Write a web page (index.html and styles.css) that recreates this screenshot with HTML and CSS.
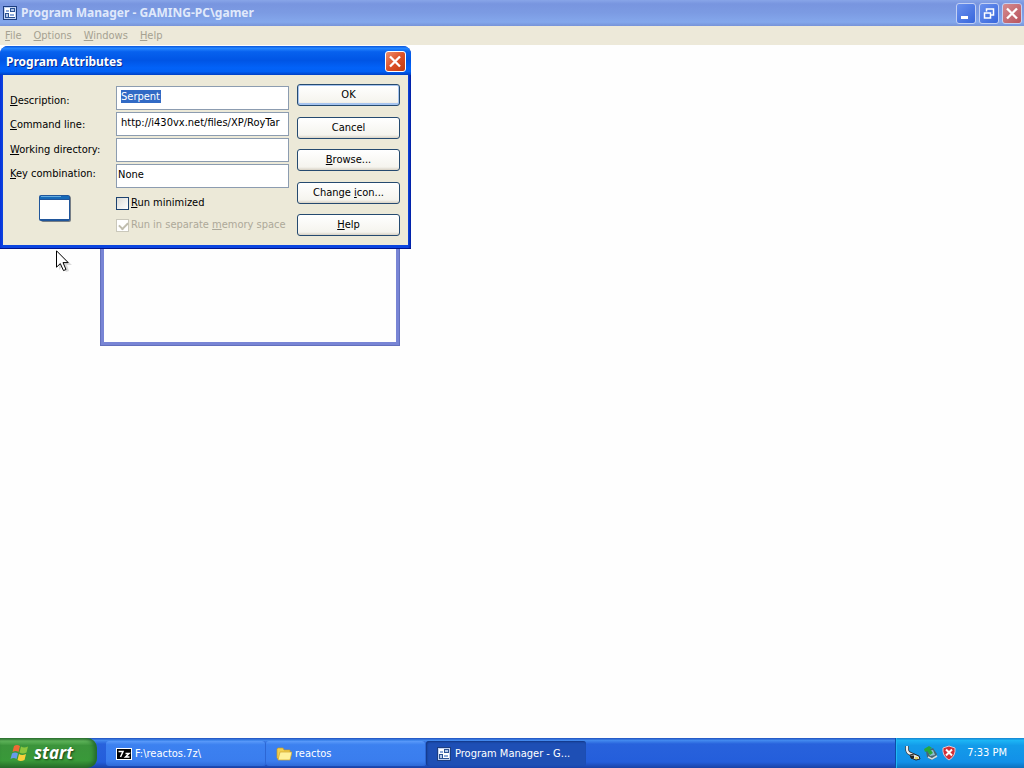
FILE: index.html
```html
<!DOCTYPE html>
<html lang="en">
<head>
<meta charset="utf-8">
<title>Program Manager - GAMING-PC\gamer</title>
<link rel="stylesheet" href="styles.css">
</head>
<body class="desktop">
<svg class="defs" aria-hidden="true">
  <symbol id="progman" viewBox="0 0 14 14">
    <rect x=".5" y=".5" width="13" height="13" fill="#c3d3f2" stroke="#1c3d80"/>
    <rect x="2" y="2" width="10" height="10" fill="#2c5394"/>
    <rect x="2" y="2" width="5" height="5" fill="#fff"/>
    <rect x="3" y="4" width="3" height="2" fill="#8eaada"/>
    <rect x="6" y="6" width="6" height="5" fill="#fff"/>
    <rect x="7" y="8" width="4" height="2" fill="#8eaada"/>
    <path d="M8 3h3v2H8zM3 8h2v3H3z" fill="#b3c7ea"/>
  </symbol>
  <symbol id="close" viewBox="0 0 18 18"><path d="M4 4l10 10M14 4L4 14" stroke="#fff" stroke-width="2.3"/></symbol>
</svg>
<main class="manager">
  <header class="manager-title">
    <svg class="title-icon"><use href="#progman"/></svg>
    <h1 class="caption">Program Manager - GAMING-PC\gamer</h1>
    <button class="control" aria-label="Minimize"><svg viewBox="0 0 18 18"><path d="M4 13h7" stroke="#fff" stroke-width="3"/></svg></button>
    <button class="control" aria-label="Restore"><svg viewBox="0 0 18 18"><path d="M6.500 7V4.500h7v6H11M6 4.500h8M4.500 8.500h6v5h-6zM4 8.500h7" fill="none" stroke="#fff" stroke-width="1.500"/></svg></button>
    <button class="control control-close" aria-label="Close"><svg><use href="#close"/></svg></button>
  </header>
  <nav class="menu">
    <button class="menu-item"><u>F</u>ile</button>
    <button class="menu-item"><u>O</u>ptions</button>
    <button class="menu-item"><u>W</u>indows</button>
    <button class="menu-item"><u>H</u>elp</button>
  </nav>
  <div class="workspace">
    <section class="group-window" aria-label="Program group"></section>
    <form class="dialog" aria-labelledby="dialog-title">
      <header class="dialog-title">
        <h2 class="caption" id="dialog-title">Program Attributes</h2>
        <button type="button" class="control control-close active" aria-label="Close"><svg><use href="#close"/></svg></button>
      </header>
      <div class="dialog-body">
        <div class="labels">
          <label for="description"><u>D</u>escription:</label>
          <label for="command"><u>C</u>ommand line:</label>
          <label for="directory"><u>W</u>orking directory:</label>
          <label for="keys"><u>K</u>ey combination:</label>
          <svg class="program-icon" viewBox="0 0 32 28">
            <rect x="2" y="2" width="30" height="26" rx="2" fill="#777e85"/>
            <rect x="0" y="1" width="31" height="26" rx="2" fill="#20569b"/>
            <path d="M1 2h29v3H1z" fill="#176ab8"/><path d="M2 2h20v1H2z" fill="#65acdf"/>
            <path d="M1 6h29v19H1z" fill="#fff"/>
          </svg>
        </div>
        <div class="fields">
          <input class="text-box selected" id="description" value="Serpent">
          <input class="text-box" id="command" value="http://i430vx.net/files/XP/RoyTar">
          <input class="text-box" id="directory">
          <input class="text-box hotkey" id="keys" value="None">
          <label class="option"><input type="checkbox" class="tick"><span><u>R</u>un minimized</span></label>
          <label class="option disabled"><input type="checkbox" class="tick" checked disabled><span>Run in separate <u>m</u>emory space</span></label>
        </div>
        <div class="actions">
          <button type="button" class="button default">OK</button>
          <button type="button" class="button">Cancel</button>
          <button type="button" class="button"><span><u>B</u>rowse...</span></button>
          <button type="button" class="button"><span>Change <u>i</u>con...</span></button>
          <button type="button" class="button"><span><u>H</u>elp</span></button>
        </div>
      </div>
    </form>
    <svg class="pointer" viewBox="0 0 16 22">
      <path d="M3 3v17l4-4 3 6 3-1-2-6h5z" fill="#999" opacity=".35"/>
      <path d="M.5.8v16.400l3.800-3.600 3.200 7 2.500-1.100-3-6.900h5.200z" fill="#fff" stroke="#000"/>
    </svg>
  </div>
</main>
<footer class="taskbar">
  <button class="start">
    <svg class="flag" viewBox="0 0 20 18">
      <path d="M4 2q3-2 6 0L8.500 8q-3-2-6 0z" fill="#ef6a35"/>
      <path d="M11 2.500q3 2 7 0L16.500 8.500q-4 2-7 0z" fill="#8cc63e"/>
      <path d="M2 9.500q3-2 6 0L6.500 15q-3-2-6 0z" fill="#669bea"/>
      <path d="M9 10q3 2 7 0L14.500 16q-4 2-7 0z" fill="#f9cf3b"/>
    </svg>
    <span>start</span>
  </button>
  <div class="tasks">
    <button class="task">
      <svg class="task-icon" viewBox="0 0 16 16"><path d="M0 2h16v12H0z" fill="#fff"/><path d="M1 3h14v10H1z" fill="#000"/><path d="M2.500 5.500H7L4.500 11M9.500 7.500H13l-3.500 3.500h4" fill="none" stroke="#fff" stroke-width="1.500"/></svg>
      <span>F:\reactos.7z\</span>
    </button>
    <button class="task">
      <svg class="task-icon" viewBox="0 0 16 16"><path d="M1 3l1-1h5l1 2h6v9H2L1 12z" fill="#f1cf50" stroke="#c79a20" stroke-width=".7"/><path d="M4 6h12l-2 8H2z" fill="#fff19b" stroke="#d0a52d" stroke-width=".7"/></svg>
      <span>reactos</span>
    </button>
    <button class="task pressed">
      <svg class="task-icon" viewBox="-1 -1 16 16"><use href="#progman" width="14" height="14"/></svg>
      <span>Program Manager - G...</span>
    </button>
  </div>
  <div class="tray">
    <svg class="tray-icon" viewBox="0 0 16 16"><path d="M2 1v3q0 4 4 5l6 3" fill="none" stroke="#333" stroke-width="3.500"/><path d="M2 1v3q0 4 4 5l6 3" fill="none" stroke="#eee" stroke-width="2.200"/><path d="M5 10l4-1 5 2 1 3-4 1-5-2z" fill="#e6e6e0" stroke="#222"/><path d="M6 12h3" stroke="#222" stroke-width="3"/><path d="M10 13h3" stroke="#e8d45c" stroke-width="2"/></svg>
    <svg class="tray-icon" viewBox="0 0 16 16"><path d="M3 6l7-3 4 6-1 4-5 2-4-3z" fill="#4a6670"/><path d="M5 6l5-1 2 5-5 1z" fill="#8cc1d2"/><path d="M1 4l5-3 3 2-2 1 3 4-3 2-3-4-2 1z" fill="#27a83b"/><path d="M5 12l4 2 5-3" fill="none" stroke="#d4dfdf" stroke-width="1.500"/></svg>
    <svg class="tray-icon" viewBox="0 0 16 16"><path d="M8 1l6 2q1 8-6 12Q1 11 2 3z" fill="#d22e35" stroke="#e4c4cd"/><path d="M5 4.500l6 6M11 4.500l-6 6" stroke="#fff" stroke-width="2"/></svg>
    <time class="clock">7:33 PM</time>
  </div>
</footer>
</body>
</html>
```
FILE: styles.css
```css
* { box-sizing: border-box; }
.desktop {
  margin: 0;
  height: 100vh;
  display: flex;
  flex-direction: column;
  overflow: hidden;
  background: #fefefe;
  color: #000;
  font: 11px/14px "DejaVu Sans Condensed", "DejaVu Sans", sans-serif;
}
button, input { font: inherit; color: inherit; }
button { padding: 0; border: 0; background: none; }
.defs { position: absolute; width: 0; height: 0; }
.manager { flex: 1; display: flex; flex-direction: column; min-height: 0; }
.manager-title {
  display: flex;
  align-items: center;
  gap: 3px;
  height: 26px;
  padding: 0 2px 0 3px;
  color: #e0e9fb;
  background: linear-gradient(#88a5e8, #7895df 15%, #7c9be3 50%, #84a8ec 85%, #7793d8);
}
.title-icon { width: 14px; height: 14px; }
.caption { flex: 1; margin: 0; font: bold 12px/18px "Noto Sans", "Open Sans", sans-serif; }
.manager-title .caption { padding-left: 1px; }
.control {
  width: 20px;
  height: 21px;
  border: 1px solid #c2d0f4;
  border-radius: 3px;
  background: linear-gradient(135deg, #6a91ee, #3766dc);
}
.control svg { display: block; width: 18px; height: 19px; }
.control-close { background: linear-gradient(135deg, #d58b8f, #b8545d); }
.control-close.active { width: 21px; border-color: #fff; background: linear-gradient(135deg, #ee9070, #dc5028 50%, #c23c10); }
.menu { display: flex; gap: 12px; height: 19px; padding: 2px 5px; background: #ede9d9; color: #a5a191; }
.workspace { position: relative; flex: 1; min-height: 0; background: #fefefe; }
.group-window {
  position: absolute;
  left: 100px;
  top: 101px;
  width: 300px;
  height: 200px;
  border: 4px solid #7885d5;
  outline: 1px solid #6370bd;
  outline-offset: -1px;
}
.dialog {
  position: absolute;
  left: 0;
  top: 1px;
  width: 411px;
  padding: 0 3px 3px;
  border-radius: 8px 8px 0 0;
  background: linear-gradient(90deg, #0831d9, #0b45e0 3px, #0b45e0 calc(100% - 3px), #001ca0);
  border-bottom: 1px solid #00138c;
}
.dialog-title {
  display: flex;
  align-items: center;
  height: 29px;
  margin: 0 -3px;
  padding: 2px 5px 0 6px;
  border-radius: 8px 8px 0 0;
  color: #fff;
  text-shadow: 1px 1px #0a2b91;
  background: linear-gradient(#0855dc, #2586ff 8%, #0761ee 20%, #0055e5 50%, #0262f8 75%, #0160f4 88%, #0040c4);
}
.dialog-body {
  display: flex;
  gap: 8px;
  padding: 9px 8px 9px 7px;
  background: #ece9d8;
}
.labels { display: flex; flex-direction: column; width: 98px; padding-top: 5px; white-space: nowrap; }
.labels label { height: 24px; line-height: 24px; }
.labels label:nth-child(even) { height: 25px; }
.program-icon { width: 32px; height: 28px; margin: 7px 0 0 29px; }
.fields { flex: 1; min-width: 0; display: flex; flex-direction: column; gap: 2px; padding-top: 2px; }
.text-box {
  width: 100%;
  height: 24px;
  padding: 0 4px 4px;
  border: 1px solid #8c9cb0;
  border-radius: 0;
  background: #fff;
  outline: 0;
}
.hotkey { padding-left: 1px; }
.selected { color: #fff; background: linear-gradient(#316ac5, #316ac5) 4px 3px / 40px 13px no-repeat #fff; }
.option { display: flex; align-items: center; gap: 2px; height: 20px; padding-top: 6px; white-space: nowrap; }
.tick {
  appearance: none;
  flex: none;
  width: 13px;
  height: 13px;
  margin: 0;
  border: 1px solid #1c4270;
  background: linear-gradient(135deg, #dcdcd7, #fff);
}
.disabled { color: #aca899; }
.tick:disabled { border-color: #cac8bb; background: #fff; }
.tick:checked::before {
  content: "";
  display: block;
  width: 7px;
  height: 4px;
  margin: 2px;
  border: solid #c0bdae;
  border-width: 0 0 2px 2px;
  transform: rotate(-45deg);
}
.actions {
  display: flex;
  flex-direction: column;
  justify-content: space-between;
  width: 103px;
  min-height: 152px;
}
.button {
  height: 22px;
  border: 1px solid #254a70;
  border-radius: 3px;
  background: linear-gradient(#fff, #f5f4ee 85%, #d8d2c5);
}
.default { box-shadow: inset 0 0 0 1px #a6c4ef, inset 0 -2px #a6c4ef; }
.pointer { position: absolute; left: 56px; top: 205px; width: 16px; height: 22px; }
.taskbar {
  display: flex;
  height: 30px;
  color: #fff;
  background: linear-gradient(#1f50be, #4289ee 8%, #2862dc 20%, #245edb 80%, #1941a5);
}
.start {
  display: flex;
  align-items: center;
  gap: 4px;
  width: 97px;
  padding-left: 10px;
  border-radius: 0 10px 10px 0;
  font: italic bold 17px/24px "Open Sans", "Noto Sans", sans-serif;
  text-shadow: 1px 1px 2px #173d14;
  background: linear-gradient(#327534, #60b65b 10%, #3b943b 25%, #399939 75%, #286f29);
  box-shadow: inset -3px 0 4px #23682b;
}
.flag { width: 20px; height: 18px; }
.tasks { flex: 1; display: flex; padding: 3px 0 2px 9px; min-width: 0; }
.task {
  display: flex;
  align-items: center;
  gap: 3px;
  width: 160px;
  padding-left: 10px;
  border-radius: 3px;
  background: linear-gradient(#5b9bfa, #3c81f0 15%, #3a7dee 80%, #2e6ad8);
  box-shadow: inset -1px 0 #2c66d4;
  white-space: nowrap;
}
.task.pressed { padding-top: 1px; background: #1e4fb5; box-shadow: inset 1px 1px 2px #123783; }
.task-icon { width: 16px; height: 16px; }
.tray {
  display: flex;
  align-items: center;
  gap: 2px;
  padding: 0 17px 0 9px;
  border-left: 1px solid #0b4da8;
  background: linear-gradient(#1582cf, #1cb5f5 8%, #139be9 25%, #1290e8 80%, #0d70bd);
  box-shadow: inset 1px 0 #20b9f4;
}
.tray-icon { width: 16px; height: 16px; }
.clock { margin-left: 8px; }
```
